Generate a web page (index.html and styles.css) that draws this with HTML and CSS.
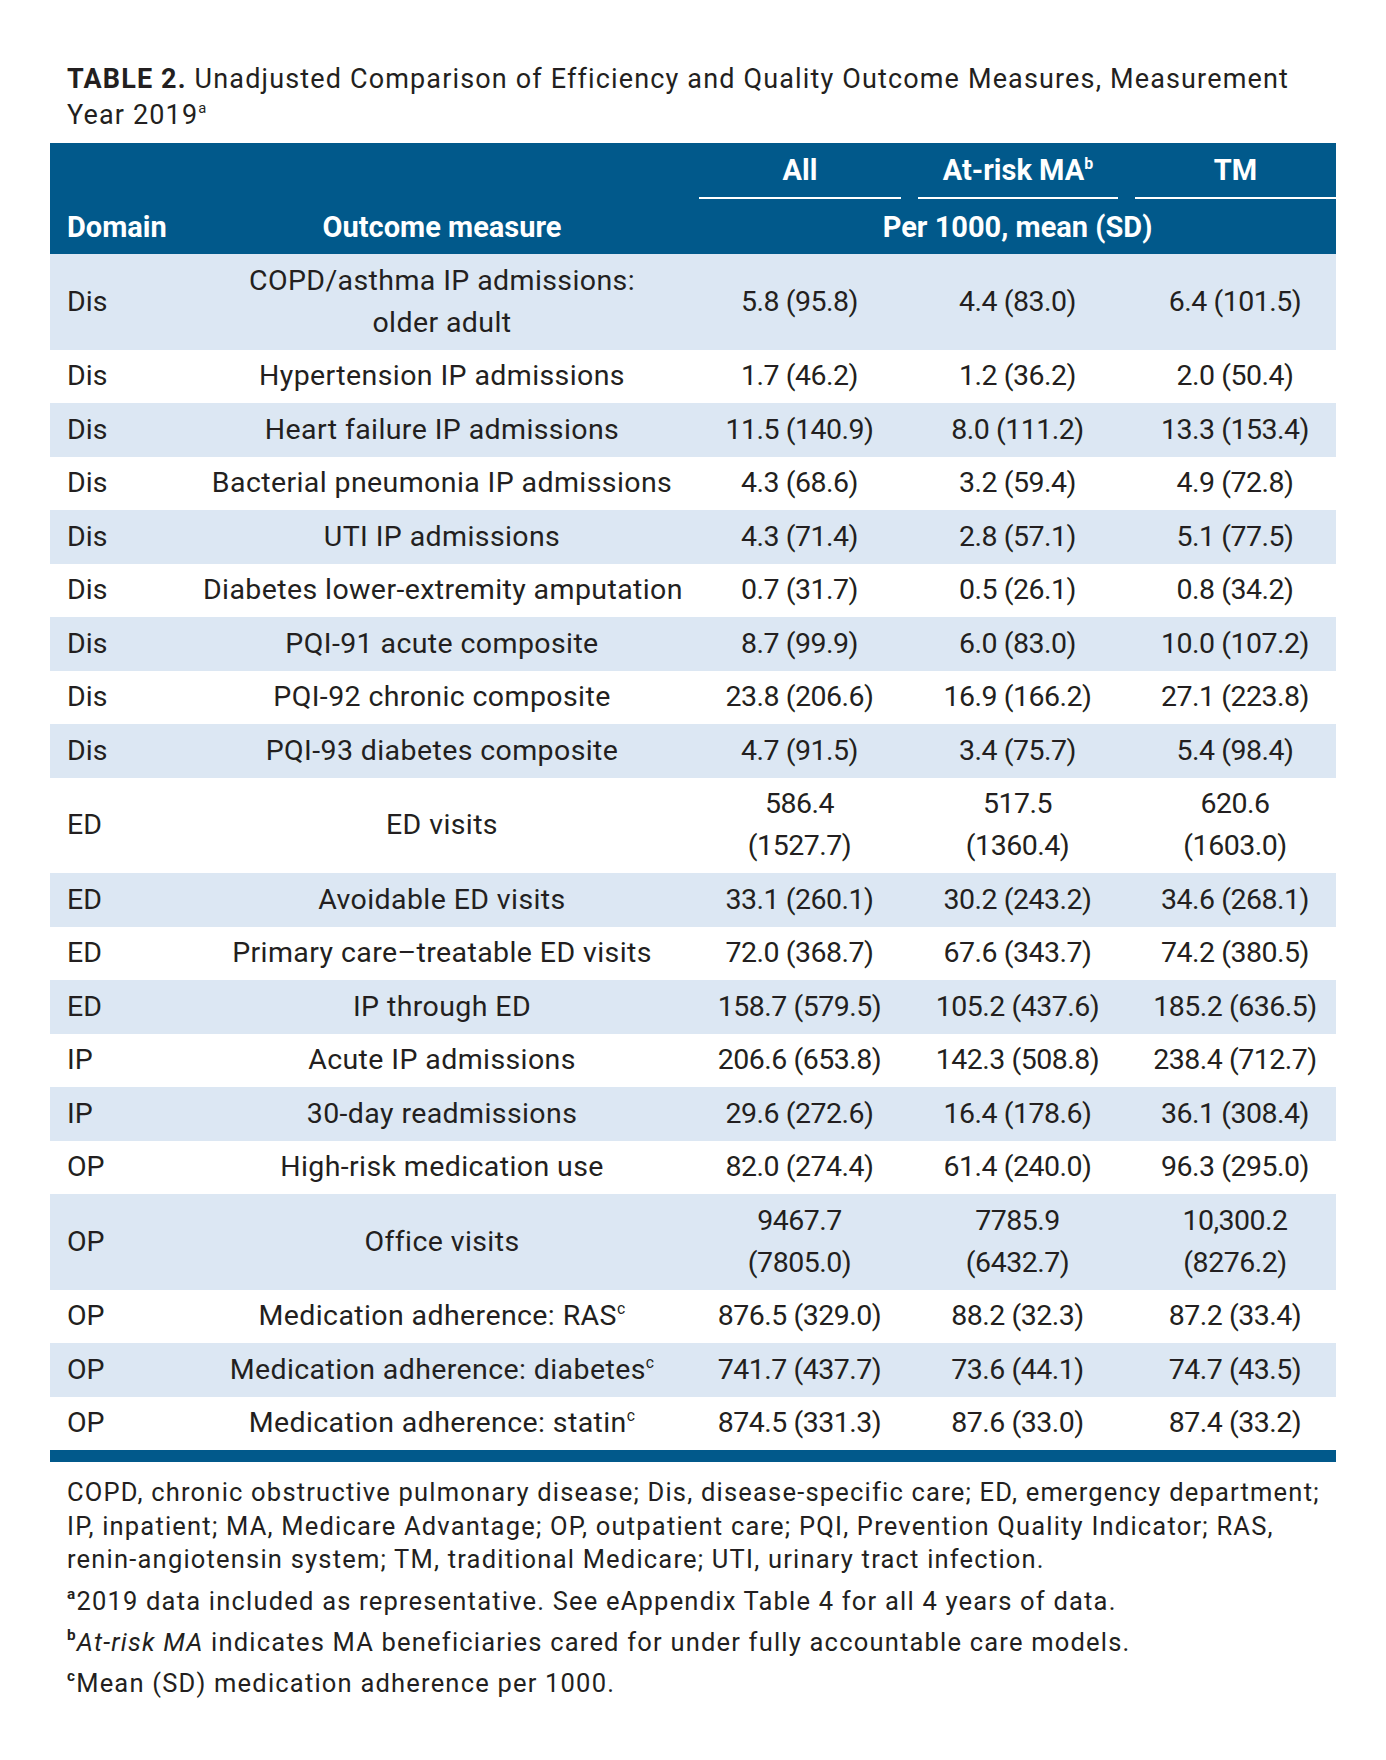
FILE: index.html
```html
<!DOCTYPE html>
<html lang="en">
<head>
<meta charset="utf-8">
<title>Table 2</title>
<link rel="stylesheet" href="styles.css">
</head>
<body>
<div class="page">
  <h1 class="title">
    <span class="line"><b>TABLE 2.</b> <span>Unadjusted Comparison of Efficiency and Quality Outcome Measures, Measurement</span></span>
    <span class="line"><span>Year 2019</span><sup>a</sup></span>
  </h1>
  <table class="data">
    <colgroup>
      <col class="c-dom"><col class="c-out"><col class="c-all"><col class="c-ma"><col class="c-tm">
    </colgroup>
    <thead>
      <tr class="h1">
        <th></th><th></th>
        <th class="grp"><div class="ul">All</div></th>
        <th class="grp"><div class="ul"><span>At-risk MA</span><sup>b</sup></div></th>
        <th class="grp"><div class="ul">TM</div></th>
      </tr>
      <tr class="h2">
        <th class="dom">Domain</th>
        <th class="out">Outcome measure</th>
        <th class="val" colspan="3">Per 1000, mean (SD)</th>
      </tr>
    </thead>
    <tbody>
      <tr><td class="dom">Dis</td><td class="out">COPD/asthma IP admissions:<br>older adult</td><td class="val">5.8 (95.8)</td><td class="val">4.4 (83.0)</td><td class="val">6.4 (101.5)</td></tr>
      <tr><td class="dom">Dis</td><td class="out">Hypertension IP admissions</td><td class="val">1.7 (46.2)</td><td class="val">1.2 (36.2)</td><td class="val">2.0 (50.4)</td></tr>
      <tr><td class="dom">Dis</td><td class="out">Heart failure IP admissions</td><td class="val">11.5 (140.9)</td><td class="val">8.0 (111.2)</td><td class="val">13.3 (153.4)</td></tr>
      <tr><td class="dom">Dis</td><td class="out">Bacterial pneumonia IP admissions</td><td class="val">4.3 (68.6)</td><td class="val">3.2 (59.4)</td><td class="val">4.9 (72.8)</td></tr>
      <tr><td class="dom">Dis</td><td class="out">UTI IP admissions</td><td class="val">4.3 (71.4)</td><td class="val">2.8 (57.1)</td><td class="val">5.1 (77.5)</td></tr>
      <tr><td class="dom">Dis</td><td class="out">Diabetes lower-extremity amputation</td><td class="val">0.7 (31.7)</td><td class="val">0.5 (26.1)</td><td class="val">0.8 (34.2)</td></tr>
      <tr><td class="dom">Dis</td><td class="out">PQI-91 acute composite</td><td class="val">8.7 (99.9)</td><td class="val">6.0 (83.0)</td><td class="val">10.0 (107.2)</td></tr>
      <tr><td class="dom">Dis</td><td class="out">PQI-92 chronic composite</td><td class="val">23.8 (206.6)</td><td class="val">16.9 (166.2)</td><td class="val">27.1 (223.8)</td></tr>
      <tr><td class="dom">Dis</td><td class="out">PQI-93 diabetes composite</td><td class="val">4.7 (91.5)</td><td class="val">3.4 (75.7)</td><td class="val">5.4 (98.4)</td></tr>
      <tr><td class="dom">ED</td><td class="out">ED visits</td><td class="val">586.4<br>(1527.7)</td><td class="val">517.5<br>(1360.4)</td><td class="val">620.6<br>(1603.0)</td></tr>
      <tr><td class="dom">ED</td><td class="out">Avoidable ED visits</td><td class="val">33.1 (260.1)</td><td class="val">30.2 (243.2)</td><td class="val">34.6 (268.1)</td></tr>
      <tr><td class="dom">ED</td><td class="out">Primary care–treatable ED visits</td><td class="val">72.0 (368.7)</td><td class="val">67.6 (343.7)</td><td class="val">74.2 (380.5)</td></tr>
      <tr><td class="dom">ED</td><td class="out">IP through ED</td><td class="val">158.7 (579.5)</td><td class="val">105.2 (437.6)</td><td class="val">185.2 (636.5)</td></tr>
      <tr><td class="dom">IP</td><td class="out">Acute IP admissions</td><td class="val">206.6 (653.8)</td><td class="val">142.3 (508.8)</td><td class="val">238.4 (712.7)</td></tr>
      <tr><td class="dom">IP</td><td class="out">30-day readmissions</td><td class="val">29.6 (272.6)</td><td class="val">16.4 (178.6)</td><td class="val">36.1 (308.4)</td></tr>
      <tr><td class="dom">OP</td><td class="out">High-risk medication use</td><td class="val">82.0 (274.4)</td><td class="val">61.4 (240.0)</td><td class="val">96.3 (295.0)</td></tr>
      <tr><td class="dom">OP</td><td class="out">Office visits</td><td class="val">9467.7<br>(7805.0)</td><td class="val">7785.9<br>(6432.7)</td><td class="val">10,300.2<br>(8276.2)</td></tr>
      <tr><td class="dom">OP</td><td class="out"><span>Medication adherence: RAS</span><sup>c</sup></td><td class="val">876.5 (329.0)</td><td class="val">88.2 (32.3)</td><td class="val">87.2 (33.4)</td></tr>
      <tr><td class="dom">OP</td><td class="out"><span>Medication adherence: diabetes</span><sup>c</sup></td><td class="val">741.7 (437.7)</td><td class="val">73.6 (44.1)</td><td class="val">74.7 (43.5)</td></tr>
      <tr><td class="dom">OP</td><td class="out"><span>Medication adherence: statin</span><sup>c</sup></td><td class="val">874.5 (331.3)</td><td class="val">87.6 (33.0)</td><td class="val">87.4 (33.2)</td></tr>
    </tbody>
  </table>
  <div class="bar"></div>
  <div class="notes">
    <p>COPD, chronic obstructive pulmonary disease; Dis, disease-specific care; ED, emergency department; IP, inpatient; MA, Medicare Advantage; OP, outpatient care; PQI, Prevention Quality Indicator; RAS, renin-angiotensin system; TM, traditional Medicare; UTI, urinary tract infection.</p>
    <p><sup>a</sup><span>2019 data included as representative. See eAppendix Table 4 for all 4 years of data.</span></p>
    <p><sup>b</sup><i>At-risk MA</i><span> indicates MA beneficiaries cared for under fully accountable care models.</span></p>
    <p><sup>c</sup><span>Mean (SD) medication adherence per 1000.</span></p>
  </div>
</div>
</body>
</html>
```

FILE: styles.css
```css
html, body {
  margin: 0;
  padding: 0;
  background: #ffffff;
}

body {
  font-family: Roboto, "Liberation Sans", Arial, sans-serif;
  color: #231f20;
}

.page {
  width: 1286px;
  padding: 61px 0 0 50px;
}

.title {
  margin: 0 0 10px 0;
  padding: 0 0 0 17px;
  font-size: 27px;
  line-height: 36px;
  letter-spacing: 1.15px;
  font-weight: 400;
  color: #231f20;
}

.title .line {
  display: block;
  white-space: nowrap;
}

.title b {
  font-weight: 700;
}

.title sup {
  font-size: 0.55em;
  line-height: 0;
  vertical-align: 0.72em;
}

.data sup {
  font-size: 0.55em;
  line-height: 0;
  vertical-align: 0.72em;
}

.data {
  width: 1286px;
  border-collapse: collapse;
  table-layout: fixed;
  font-size: 28.5px;
}

.c-dom { width: 152px; }
.c-out { width: 480px; }
.c-all { width: 219px; }
.c-ma { width: 217px; }
.c-tm { width: 218px; }

.data thead {
  background: #01598b;
  color: #ffffff;
}

.data th {
  padding: 0;
  font-weight: 700;
  font-size: 29px;
}

.h1 th {
  height: 56px;
  vertical-align: bottom;
}

.h1 .grp {
  padding-left: 17px;
}

.ul {
  height: 54px;
  line-height: 54px;
  border-bottom: 2px solid #ffffff;
  text-align: center;
  white-space: nowrap;
}

.h2 th {
  height: 55px;
  vertical-align: middle;
}

.data .dom {
  text-align: left;
  padding-left: 17px;
}

.data .out {
  text-align: center;
}

.data td.out {
  letter-spacing: 0.4px;
}

.data .val {
  text-align: center;
  padding-left: 17px;
}

.data td.val {
  letter-spacing: -0.5px;
}

.data td {
  padding-top: 5.75px;
  padding-bottom: 5.75px;
  line-height: 42px;
  vertical-align: middle;
  white-space: nowrap;
}

.data tbody tr:nth-child(odd) {
  background: #dce7f3;
}

.bar {
  height: 12px;
  background: #01598b;
}

.notes {
  padding: 14px 0 0 17px;
  font-size: 25.5px;
  line-height: 33.7px;
  letter-spacing: 1.2px;
}

.notes p {
  margin: 0 0 7.5px 0;
}

.notes sup {
  font-size: 0.6em;
  font-weight: 700;
  line-height: 0;
  vertical-align: 0.7em;
}
```
